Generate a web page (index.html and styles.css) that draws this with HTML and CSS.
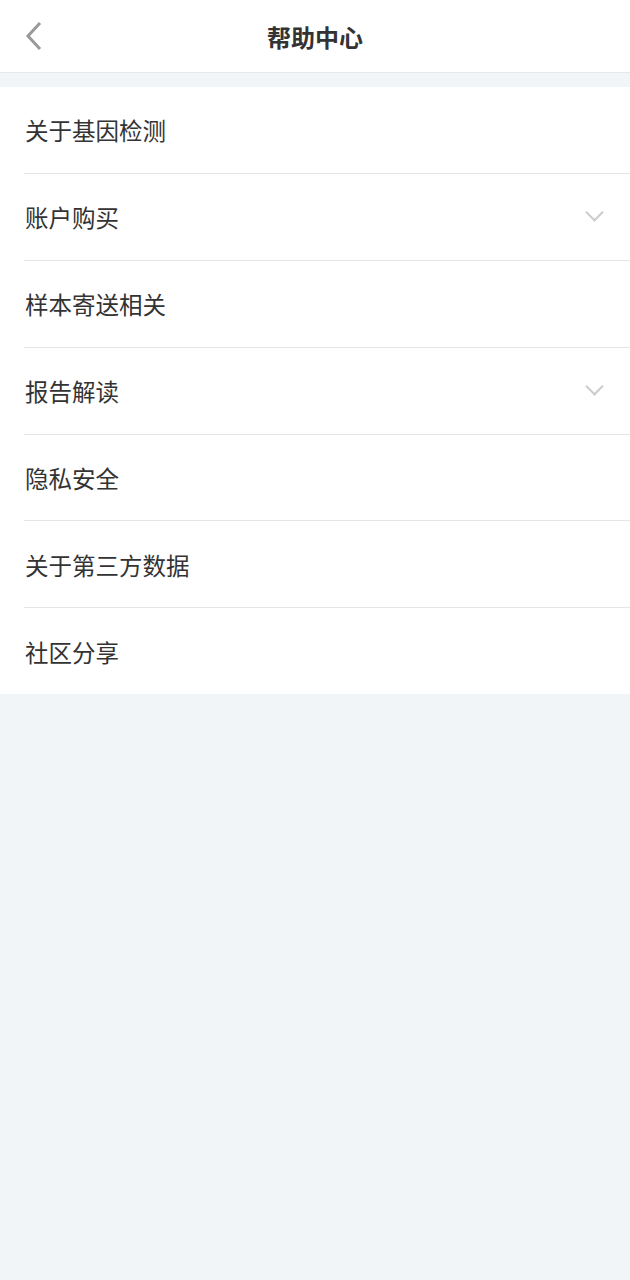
FILE: index.html
```html
<!DOCTYPE html>
<html lang="zh-CN">
<head>
<meta charset="utf-8" />
<title>帮助中心</title>
<link rel="stylesheet" href="styles.css">
</head>
<body>
<!--顶部导航-->
<div class="header">
    <a class="back" href="#">
        <svg width="20" height="30" viewBox="0 0 20 30"><polyline points="17,2 5,15 17,28" fill="none" stroke="#999" stroke-width="3"/></svg>
    </a>
    <h1>帮助中心</h1>
</div>
<!--问题列表-->
<ul class="list">
    <li><span>关于基因检测</span></li>
    <li><span>账户购买</span><i class="arrow"></i></li>
    <li><span>样本寄送相关</span></li>
    <li><span>报告解读</span><i class="arrow"></i></li>
    <li><span>隐私安全</span></li>
    <li><span>关于第三方数据</span></li>
    <li><span>社区分享</span></li>
</ul>
</body>
</html>
```
FILE: styles.css
```css
/*清除默认样式*/
body,ul,li,h1{padding:0; margin:0;}
li{list-style:none;}
body{background:#f2f5f8; font-family:"Noto Sans CJK SC","Liberation Sans",sans-serif; color:#333;}
/*顶部导航*/
.header{height:72px; background:#fff; border-bottom:1px solid #e6e9ec; display:flex; align-items:center; justify-content:center; position:relative;}
.header h1{font-size:24px; font-weight:bold; color:#333;}
.back{position:absolute; left:23px; top:21px; display:block; width:20px; height:30px;}
.back svg{display:block;}
/*问题列表*/
.list{margin-top:14px; background:#fff; padding-left:24px;}
.list li{height:85.9px; border-bottom:1px solid #e5e5e5; display:flex; align-items:center; justify-content:space-between; font-size:23.5px; color:#333;}
.list li:last-child{border-bottom:none;}
.list li span{padding-left:1px; padding-top:1px;}
.arrow{display:block; width:11px; height:11px; border-right:2px solid #ccc; border-bottom:2px solid #ccc; transform:rotate(45deg); margin:-8px 29px 0 0;}
```
